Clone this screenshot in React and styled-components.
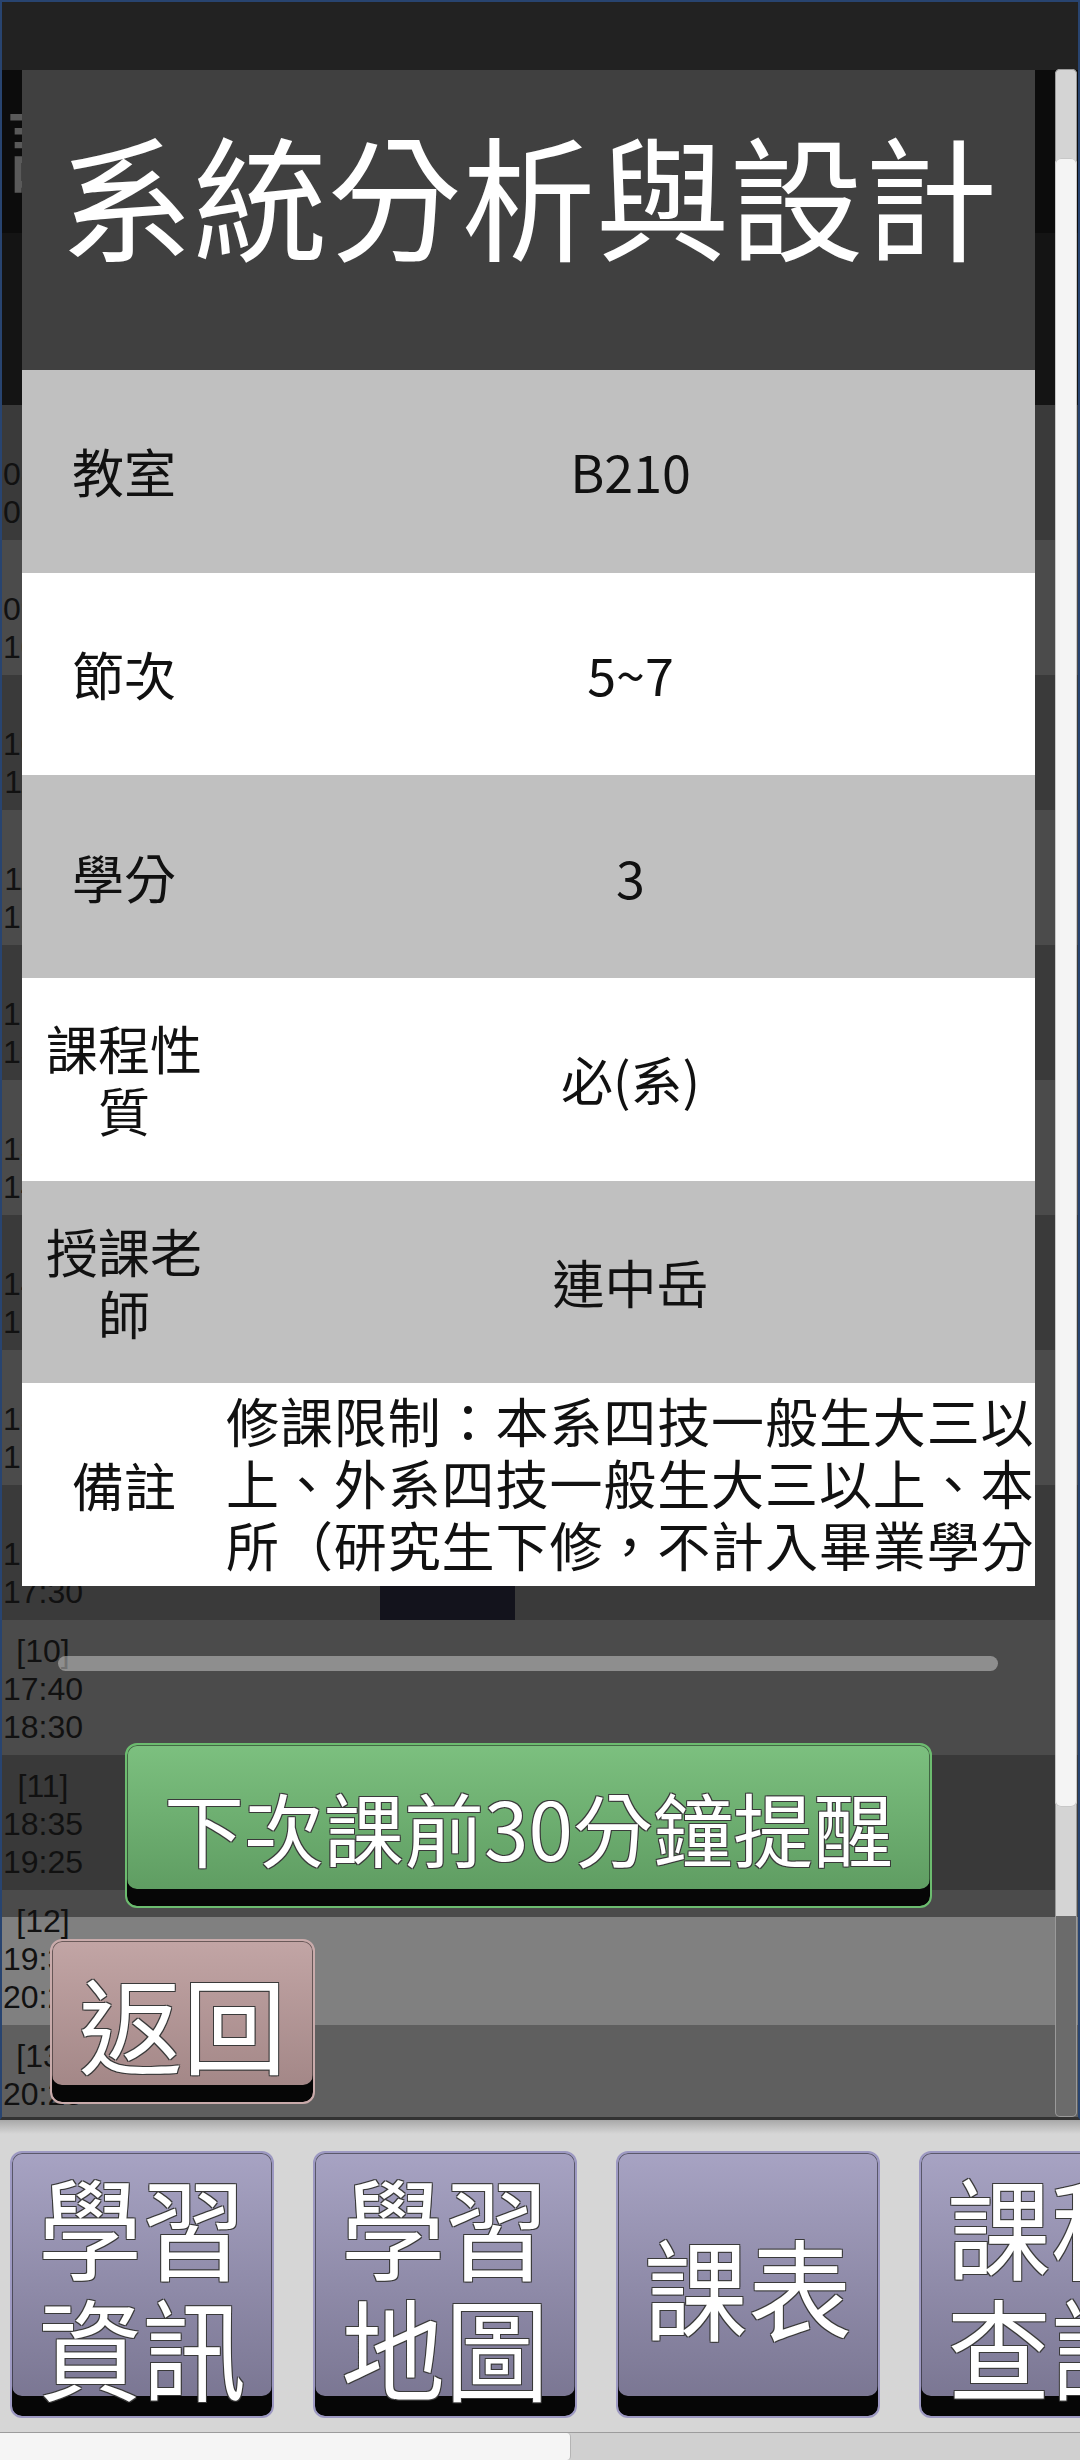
import styled, { createGlobalStyle } from "styled-components";

const GlobalStyle = createGlobalStyle`
  html, body {
    margin: 0;
    padding: 0;
    background: #d6d6d6;
  }
  body {
    font-family: "Noto Sans CJK TC", "Liberation Sans", sans-serif;
  }
`;

const Page = styled.div`
  width: 1080px;
  height: 2460px;
  overflow: hidden;
  display: flex;
  flex-direction: column;
`;

/* ---------- background timetable screen ---------- */

const Screen = styled.div`
  position: relative;
  flex: 0 0 2120px;
  box-sizing: border-box;
  border: 2px solid #284470;
  border-bottom: 3px solid #333;
  background: #141414;
  overflow: hidden;
  display: flex;
  flex-direction: column;
`;

const TopBar = styled.div`
  flex: 0 0 68px;
  background: #222;
`;

const Header = styled.div`
  flex: 0 0 335px;
  display: flex;
  flex-direction: column;
`;

const HeaderTitle = styled.div`
  flex: 0 0 163px;
  background: #0c0c0c;
  color: #5a5a5a;
  font-size: 106px;
  line-height: 1;
  padding: 16px 0 0 4px;
  box-sizing: border-box;
`;

const PeriodRow = styled.div`
  flex: 0 0 135px;
  display: grid;
  grid-template-columns: 82px repeat(6, 148px);
  background: ${({ $bg }) => $bg};
`;

const PeriodLabel = styled.div`
  font-family: "Liberation Sans", Arial, sans-serif;
  font-size: 32px;
  line-height: 38px;
  color: #111;
  text-align: center;
  padding-top: 12px;
`;

const CourseCell = styled.div`
  grid-column: ${({ $col }) => $col};
  margin: 0 13px 0 0;
  background: #13131c;
`;

const VScroll = styled.div`
  position: absolute;
  left: 1053px;
  top: 67px;
  bottom: 0;
  width: 22px;
  border-radius: 5px;
  background: linear-gradient(to bottom, #d4d4d4 0 1847px, #6b6b6b 1847px);
  box-shadow: inset 0 0 0 1px #9a9a9a;
`;

const VThumb = styled.div`
  margin-top: 89px;
  height: 1649px;
  border-radius: 6px;
  background: #f4f4f4;
  box-shadow: inset 0 0 0 1px #c8c8c8;
`;

/* ---------- course detail dialog ---------- */

const Overlay = styled.div`
  position: absolute;
  left: 20px;
  top: 68px;
  width: 1013px;
  display: flex;
  flex-direction: column;
`;

const Card = styled.div`
  background: #404040;
  overflow: hidden;
`;

const CardTitle = styled.div`
  height: 300px;
  box-sizing: border-box;
  padding-top: 56px;
  color: #fff;
  font-size: 134px;
  line-height: 1;
  text-align: center;
  white-space: nowrap;
`;

const InfoRow = styled.div`
  display: grid;
  grid-template-columns: 204px 1fr;
  height: 202.7px;
  background: ${({ $alt }) => ($alt ? "#fff" : "#c0c0c0")};
  color: #111;
`;

const InfoLabel = styled.div`
  display: flex;
  align-items: center;
  justify-content: center;
  text-align: center;
  padding: 0 12px;
  font-size: 52px;
  line-height: 62px;
`;

const InfoValue = styled.div`
  display: flex;
  align-items: center;
  justify-content: center;
  font-size: 52px;
  line-height: 62px;
`;

const RemarkText = styled.div`
  align-self: start;
  box-sizing: border-box;
  padding-top: 6px;
  max-height: 192px;
  overflow: hidden;
  font-size: 53px;
  letter-spacing: 0.9px;
  line-height: 62px;
  text-align: left;
`;

const HScrollBar = styled.div`
  margin: 70px 0 0 36px;
  width: 940px;
  height: 15px;
  border-radius: 8px;
  background: rgba(210, 210, 210, 0.5);
`;

const GlossButton = styled.div`
  box-sizing: border-box;
  flex-shrink: 0;
  width: ${({ $w }) => $w}px;
  height: ${({ $h }) => $h}px;
  border: 2px solid ${({ $edge }) => $edge};
  border-radius: 12px;
  background: linear-gradient(to bottom, ${({ $top }) => $top}, ${({ $bottom }) => $bottom});
  box-shadow: inset 0 -${({ $bevel }) => $bevel}px 0 #060606,
    inset 0 0 0 1px rgba(0, 0, 0, 0.45);
  display: flex;
  align-items: center;
  justify-content: center;
  text-align: center;
  color: #fff;
  font-size: ${({ $fs }) => $fs}px;
  line-height: ${({ $lh }) => $lh || "1"};
  white-space: nowrap;
  text-shadow: 1px 1px 0 #3a3a3a, -1px -1px 0 #3a3a3a, 1px -1px 0 #3a3a3a,
    -1px 1px 0 #3a3a3a;
`;

const RemindButton = styled(GlossButton)`
  align-self: center;
  margin-top: 72px;
`;

const BackButton = styled(GlossButton)`
  margin: 31px 0 0 28px;
`;

/* ---------- bottom navigation ---------- */

const BottomBar = styled.div`
  flex: 1;
  display: flex;
  flex-direction: column;
  background: linear-gradient(to bottom, #a8a8a8 0, #d6d6d6 14px, #d6d6d6 100%);
`;

const NavRow = styled.div`
  flex: 1;
  display: flex;
  gap: 39px;
  padding: 31px 0 0 10px;
`;

const NavText = styled.div`
  transform: scaleY(1.06);
`;

const HScroll = styled.div`
  flex: 0 0 27px;
  border-top: 1px solid #9c9c9c;
  background: #d0d0d0;
  display: flex;
`;

const HThumb = styled.div`
  width: 570px;
  background: #f5f5f5;
  border-right: 1px solid #b4b4b4;
  border-radius: 0 4px 4px 0;
`;

const periods = [
  { n: 1, from: "08:10", to: "09:00", bg: "#3a3a3a" },
  { n: 2, from: "09:10", to: "10:00", bg: "#4b4b4b" },
  { n: 3, from: "10:10", to: "11:00", bg: "#3a3a3a" },
  { n: 4, from: "11:10", to: "12:00", bg: "#4b4b4b" },
  { n: 5, from: "12:40", to: "13:30", bg: "#3a3a3a" },
  { n: 6, from: "13:40", to: "14:30", bg: "#4b4b4b" },
  { n: 7, from: "14:40", to: "15:30", bg: "#3a3a3a" },
  { n: 8, from: "15:40", to: "16:30", bg: "#4b4b4b" },
  { n: 9, from: "16:40", to: "17:30", bg: "#3a3a3a" },
  { n: 10, from: "17:40", to: "18:30", bg: "#4b4b4b" },
  { n: 11, from: "18:35", to: "19:25", bg: "#393939" },
  { n: 12, from: "19:30", to: "20:20", bg: "linear-gradient(to bottom, #4b4b4b 0 27px, #808080 27px)" },
  { n: 13, from: "20:25", to: "21:15", bg: "#5f5f5f" },
];

const courseInfo = [
  { label: "教室", value: "B210" },
  { label: "節次", value: "5~7" },
  { label: "學分", value: "3" },
  { label: "課程性質", value: "必(系)" },
  { label: "授課老師", value: "連中岳" },
];

const remark =
  "修課限制：本系四技一般生大三以上、外系四技一般生大三以上、本所（研究生下修，不計入畢業學分";

const navItems = [["學習", "資訊"], ["學習", "地圖"], ["課表"], ["課程", "查詢"]];

const purple = { $edge: "#9d99c2", $top: "#a7a3c3", $bottom: "#77738f", $bevel: 20 };

function App() {
  return (
    <Page>
      <GlobalStyle />
      <Screen>
        <TopBar />
        <Header>
          <HeaderTitle>課表</HeaderTitle>
        </Header>
        {periods.map((p) => (
          <PeriodRow key={p.n} $bg={p.bg}>
            <PeriodLabel>
              [{p.n}]
              <br />
              {p.from}
              <br />
              {p.to}
            </PeriodLabel>
            {p.n >= 7 && p.n <= 9 && <CourseCell $col={4} />}
          </PeriodRow>
        ))}

        <VScroll>
          <VThumb />
        </VScroll>

        <Overlay>
          <Card>
            <CardTitle>系統分析與設計</CardTitle>
            {courseInfo.map((row, i) => (
              <InfoRow key={row.label} $alt={i % 2 === 1}>
                <InfoLabel>{row.label}</InfoLabel>
                <InfoValue>{row.value}</InfoValue>
              </InfoRow>
            ))}
            <InfoRow $alt>
              <InfoLabel>備註</InfoLabel>
              <RemarkText>{remark}</RemarkText>
            </InfoRow>
          </Card>
          <HScrollBar />
          <RemindButton
            $w={807}
            $h={165}
            $fs={80}
            $edge="#6cbc6f"
            $top="#7cc07f"
            $bottom="#5c995f"
            $bevel={17}
          >
            下次課前30分鐘提醒
          </RemindButton>
          <BackButton
            $w={265}
            $h={165}
            $fs={104}
            $edge="#c9abab"
            $top="#c2a5a5"
            $bottom="#a08484"
            $bevel={17}
          >
            返回
          </BackButton>
        </Overlay>
      </Screen>

      <BottomBar>
        <NavRow>
          {navItems.map((lines, i) => (
            <GlossButton key={i} $w={264} $h={267} $fs={104} $lh="114px" {...purple}>
              <NavText>
                {lines.map((l) => (
                  <div key={l}>{l}</div>
                ))}
              </NavText>
            </GlossButton>
          ))}
        </NavRow>
        <HScroll>
          <HThumb />
        </HScroll>
      </BottomBar>
    </Page>
  );
}

export default App;
